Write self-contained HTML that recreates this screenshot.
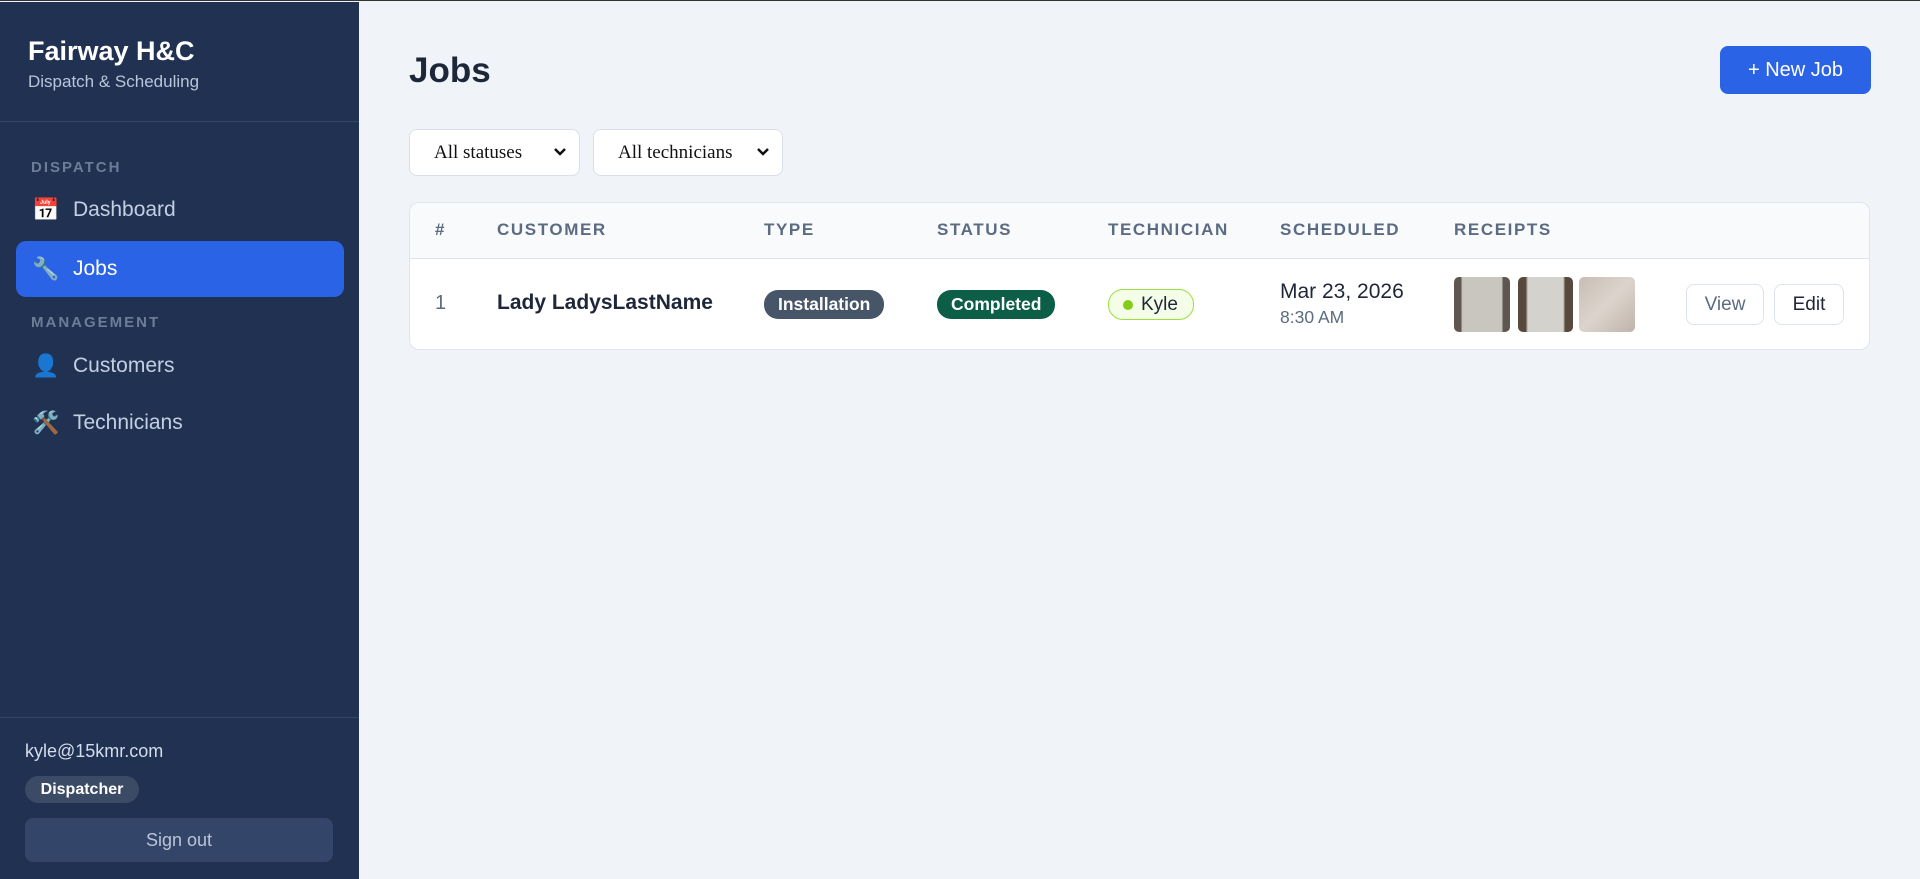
<!DOCTYPE html>
<html><head><meta charset="utf-8"><style>
*{box-sizing:border-box;margin:0;padding:0}
body{width:1920px;height:878px;font-family:"Liberation Sans",sans-serif;background:#f0f3f8;position:relative;overflow:hidden;border-top:1px solid #333}
.sb{position:absolute;left:0;top:1px;width:359px;height:877px;background:#203152}
.abs{position:absolute;white-space:nowrap}
.nav{position:absolute;left:16px;width:328px;height:56px;border-radius:10px;color:#c3d0e2;font-size:21px;display:flex;align-items:center;padding-left:16px}
.nav .ic{width:28px;font-size:22px;margin-right:13px;font-family:"Noto Color Emoji","DejaVu Sans",sans-serif}
.lbl{position:absolute;left:31px;font-size:15px;font-weight:bold;letter-spacing:2px;color:#6c7d97}
.hd{position:absolute;top:219px;font-size:17px;font-weight:bold;color:#5b6b82;letter-spacing:1.6px}
.pill{display:inline-block;color:#fff;font-weight:bold;font-size:17.5px;padding:4px 14px;border-radius:14px}
.th{position:absolute;top:276px;width:56px;height:55px;border-radius:5px}
.btn{position:absolute;top:283px;height:41px;border:1px solid #dde3ec;border-radius:8px;background:#fff;font-size:19px;display:flex;align-items:center;justify-content:center}
.sel{position:absolute;top:128px;height:47px;background:#fff;border:1px solid #d9dfe8;border-radius:8px;font-family:"Liberation Serif",serif;font-size:19px;color:#111;display:flex;align-items:center;padding-left:24px}
.sel svg{position:absolute;right:12px;top:17px}
</style></head><body>
<div class="sb">
<div class="abs" style="left:28px;top:34px;font-size:27px;font-weight:bold;color:#fff">Fairway H&amp;C</div>
<div class="abs" style="left:28px;top:70px;font-size:17px;color:#b8c6da">Dispatch &amp; Scheduling</div>
<div class="abs" style="left:0;top:119px;width:359px;height:1px;background:#33466a"></div>
<div class="lbl" style="top:157px">DISPATCH</div>
<div class="nav" style="top:180px"><span class="ic">📅</span>Dashboard</div>
<div class="nav" style="top:239px;background:#2b63e6;color:#fff"><span class="ic">🔧</span>Jobs</div>
<div class="lbl" style="top:312px">MANAGEMENT</div>
<div class="nav" style="top:336px"><span class="ic">👤</span>Customers</div>
<div class="nav" style="top:393px"><span class="ic">🛠️</span>Technicians</div>
<div class="abs" style="left:0;top:715px;width:359px;height:1px;background:#33466a"></div>
<div class="abs" style="left:25px;top:739px;font-size:18px;color:#d4ddea">kyle@15kmr.com</div>
<div class="abs" style="left:25px;top:774px;height:27px;width:114px;background:#3b4b66;border-radius:14px;color:#fff;font-weight:bold;font-size:16px;text-align:center;line-height:27px">Dispatcher</div>
<div class="abs" style="left:25px;top:816px;width:308px;height:44px;background:#34456a;border-radius:8px;color:#b9c5d7;font-size:18px;text-align:center;line-height:44px">Sign out</div>
</div>
<div class="abs" style="left:409px;top:50px;font-size:35px;font-weight:bold;color:#1d2739">Jobs</div>
<div class="abs" style="left:1720px;top:45px;width:151px;height:48px;background:#2b63e6;border-radius:8px;color:#fff;font-size:20px;text-align:center;line-height:48px">+ New Job</div>
<div class="sel" style="left:409px;width:171px">All statuses<svg width="14" height="10" viewBox="0 0 14 10"><path d="M2 2l5 5 5-5" stroke="#111" stroke-width="2.5" fill="none"/></svg></div>
<div class="sel" style="left:593px;width:190px">All technicians<svg width="14" height="10" viewBox="0 0 14 10"><path d="M2 2l5 5 5-5" stroke="#111" stroke-width="2.5" fill="none"/></svg></div>
<div class="abs" style="left:409px;top:201px;width:1461px;height:148px;background:#fff;border:1px solid #dfe5ee;border-radius:10px;overflow:hidden">
<div style="height:56px;background:#f8fafc;border-bottom:1px solid #dfe5ee"></div>
</div>
<div class="hd" style="left:435px">#</div>
<div class="hd" style="left:497px">CUSTOMER</div>
<div class="hd" style="left:764px">TYPE</div>
<div class="hd" style="left:937px">STATUS</div>
<div class="hd" style="left:1108px">TECHNICIAN</div>
<div class="hd" style="left:1280px">SCHEDULED</div>
<div class="hd" style="left:1454px">RECEIPTS</div>
<div class="abs" style="left:435px;top:291px;font-size:20px;color:#5b6b82">1</div>
<div class="abs" style="left:497px;top:290px;font-size:21px;font-weight:bold;color:#1d2739">Lady LadysLastName</div>
<div class="abs pill" style="left:764px;top:289px;background:#475569">Installation</div>
<div class="abs pill" style="left:937px;top:289px;background:#0d5e46">Completed</div>
<div class="abs" style="left:1108px;top:288px;width:86px;height:31px;border:1px solid #9be03c;background:#f3fde7;border-radius:15px;font-size:19px;color:#1d2739;line-height:29px;padding-left:32px"><span style="position:absolute;left:14px;top:10px;width:10px;height:10px;border-radius:50%;background:#84cc16"></span>Kyle</div>
<div class="abs" style="left:1280px;top:279px;font-size:21px;color:#1d2739">Mar 23, 2026</div>
<div class="abs" style="left:1280px;top:306px;font-size:17.5px;color:#5b6b82">8:30 AM</div>
<div class="th" style="left:1454px;background:linear-gradient(90deg,#5f5650 0 12%,#c9c6bf 15% 85%,#5f5650 88%)"></div>
<div class="th" style="left:1518px;width:55px;background:linear-gradient(90deg,#57493e 0 14%,#d3d2cc 18% 82%,#57493e 86%)"></div>
<div class="th" style="left:1579px;background:linear-gradient(135deg,#c8bdb5,#dcd4cc 50%,#bfb3aa)"></div>
<div class="btn" style="left:1686px;width:78px;color:#5b6b82">View</div>
<div class="btn" style="left:1774px;width:70px;color:#1d2739">Edit</div>
</body></html>
